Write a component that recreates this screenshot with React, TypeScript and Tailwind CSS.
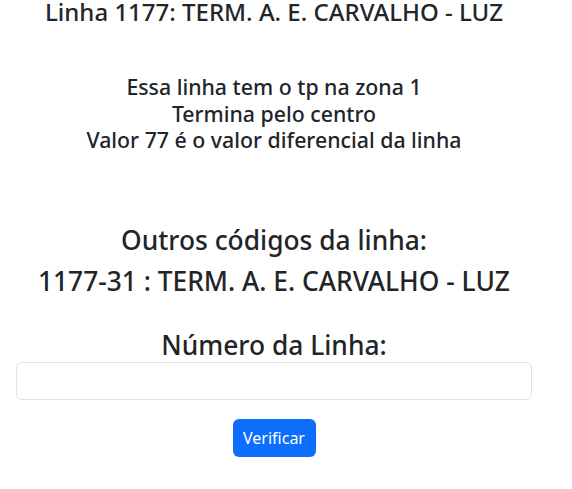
export default function App() {
  return (
    <div className="min-h-screen bg-white font-['Noto_Sans',sans-serif] text-[#212529]">
      <div className="w-[548px] flex flex-col items-center text-center">
        <h3 className="text-[24px] leading-[23px] font-medium">Linha 1177: TERM. A. E. CARVALHO - LUZ</h3>
        <h4 className="mt-[51px] text-[21.3px] leading-[26.5px] font-medium">
          Essa linha tem o tp na zona 1
          <br />
          Termina pelo centro
          <br />
          Valor 77 é o valor diferencial da linha
        </h4>
        <h2 className="mt-[71px] text-[26.35px] leading-[31.6px] font-medium">Outros códigos da linha:</h2>
        <h2 className="mt-[10px] text-[26.35px] leading-[31.6px] font-medium">1177-31 : TERM. A. E. CARVALHO - LUZ</h2>
        <h2 className="mt-[32px] text-[26.35px] leading-[31.6px] font-medium">Número da Linha:</h2>
        <div className="w-full px-4">
          <input
            type="text"
            className="mt-px block w-full h-[38px] rounded-md border border-[#dee2e6] bg-white px-3 text-base outline-none"
          />
        </div>
        <button className="mt-[19px] h-[38px] w-[83px] rounded-md bg-[#0d6efd] text-base text-white">Verificar</button>
      </div>
    </div>
  );
}
